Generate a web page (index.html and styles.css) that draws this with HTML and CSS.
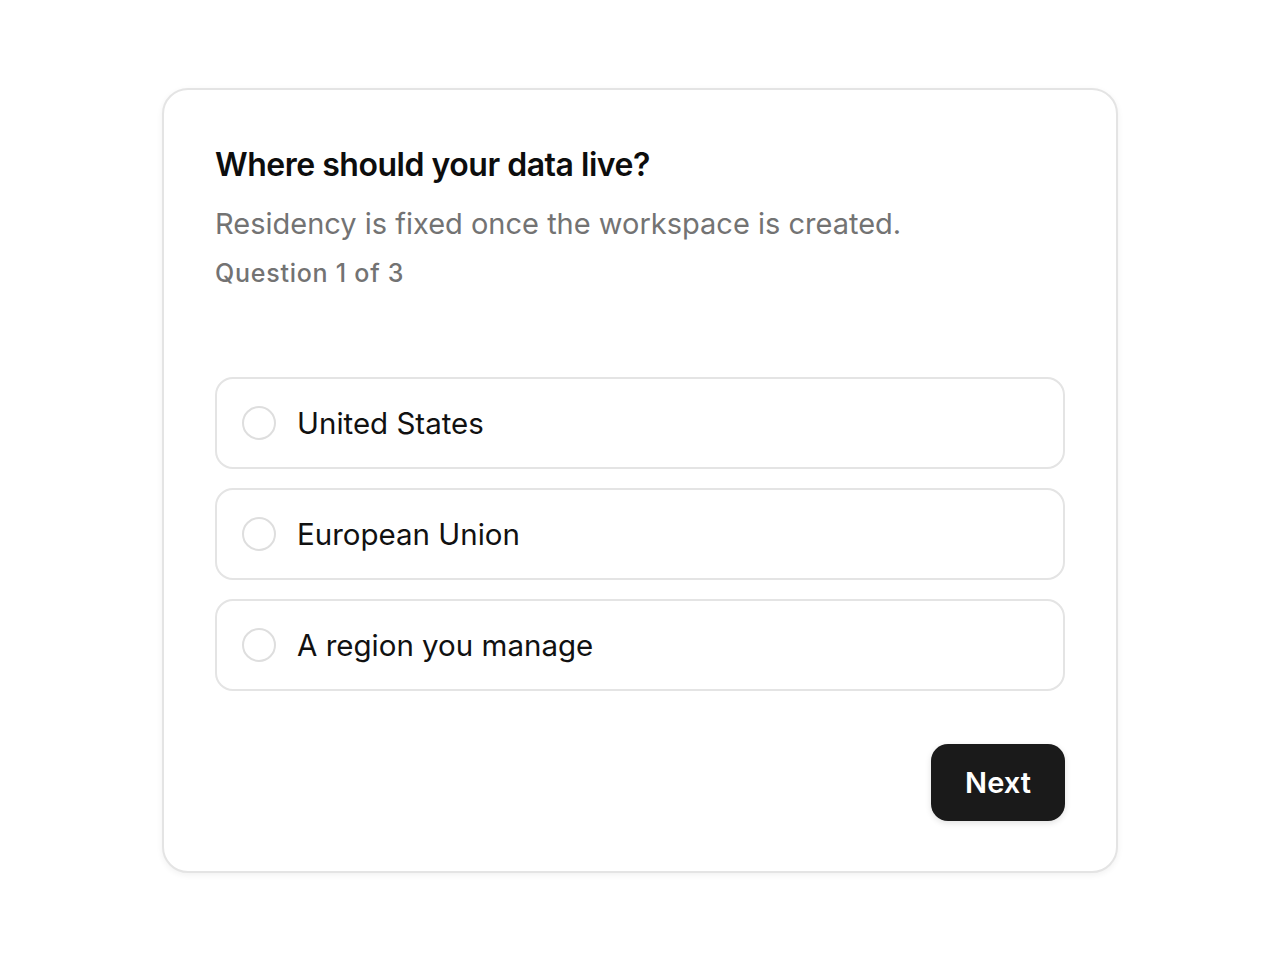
FILE: index.html
```html
<!DOCTYPE html>
<html lang="en">
<head>
<meta charset="utf-8">
<title>Data residency</title>
<link rel="stylesheet" href="styles.css">
</head>
<body>
<main class="page">
  <section class="card">
    <header class="head">
      <h1 class="title">Where should your data live?</h1>
      <p class="subtitle">Residency is fixed once the workspace is created.</p>
      <p class="step">Question 1 of 3</p>
    </header>
    <div class="options">
      <label class="option"><span class="radio"></span><span class="label">United States</span></label>
      <label class="option"><span class="radio"></span><span class="label">European Union</span></label>
      <label class="option"><span class="radio"></span><span class="label">A region you manage</span></label>
    </div>
    <div class="actions">
      <button class="next" type="button">Next</button>
    </div>
  </section>
</main>
</body>
</html>
```

FILE: styles.css
```css
* { box-sizing: border-box; }
html, body { margin: 0; padding: 0; background: #ffffff; }
body { font-family: Inter, "Noto Sans", "Liberation Sans", sans-serif; color: #111111; }
.page {
  min-height: 960px;
  display: flex;
  align-items: center;
  justify-content: center;
}
.card {
  width: 956px;
  border: 2px solid #e4e4e4;
  border-radius: 26px;
  background: #fff;
  box-shadow: 0 2px 6px rgba(0,0,0,0.06);
  padding: 51px 51px 50px 51px;
}
.head { display: flex; flex-direction: column; }
.title {
  margin: 0;
  font-size: 32px;
  line-height: 48px;
  font-weight: 600;
  letter-spacing: -0.015em;
  color: #0d0d0d;
}
.subtitle {
  margin: 15px 0 0;
  font-size: 29px;
  line-height: 40px;
  font-weight: 400;
  color: #737373;
}
.step {
  margin: 13px 0 0;
  font-size: 25px;
  line-height: 32px;
  font-weight: 500;
  letter-spacing: 0.03em;
  color: #737373;
}
.options {
  margin-top: 88px;
  display: flex;
  flex-direction: column;
  gap: 19px;
}
.option {
  display: flex;
  align-items: center;
  height: 92px;
  border: 2px solid #e4e4e4;
  border-radius: 18px;
  padding: 0 25px;
  gap: 21px;
}
.radio {
  width: 34px;
  height: 34px;
  border: 2px solid #dedede;
  border-radius: 50%;
  flex: none;
}
.label {
  font-size: 29.5px;
  font-weight: 400;
  color: #111;
}
.actions {
  margin-top: 53px;
  display: flex;
  justify-content: flex-end;
}
.next {
  width: 134px;
  height: 77px;
  border: none;
  border-radius: 17px;
  background: #1a1a1a;
  color: #ffffff;
  font-family: inherit;
  font-size: 29px;
  font-weight: 600;
  box-shadow: 0 2px 6px rgba(0,0,0,0.12);
}
```
